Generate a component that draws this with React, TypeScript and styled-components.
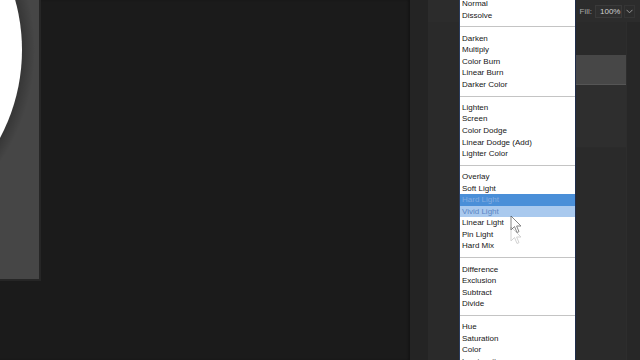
import React from 'react'
import styled, { createGlobalStyle } from 'styled-components'

const GlobalStyle = createGlobalStyle`
  html, body {
    margin: 0;
    padding: 0;
    background: #1b1b1b;
  }
  * {
    box-sizing: border-box;
  }
`

const Screen = styled.div`
  display: flex;
  width: 640px;
  height: 360px;
  overflow: hidden;
  font-family: 'Liberation Sans', Arial, sans-serif;
`

const Canvas = styled.div`
  width: 410px;
  background: #1b1b1b;
  box-shadow: inset -2px 0 2px rgba(0, 0, 0, 0.25);
`

const Document = styled.div`
  width: 41px;
  height: 281px;
  background: #464646;
  border-right: 2px solid #262626;
  border-bottom: 2px solid #262626;
  overflow: hidden;
`

const Gutter = styled.div`
  width: 18px;
  background: #242424;
`

const Panel = styled.div`
  position: relative;
  flex: 1;
  display: flex;
  flex-direction: column;
  background: #2a2a2a;
`

const Toolbar = styled.div`
  height: 22px;
  display: flex;
  align-items: center;
  justify-content: flex-end;
  padding-right: 5px;
  gap: 2px;
  background: #2c2c2c;
  font-size: 8px;
  color: #a8a8a8;
`

const FillLabel = styled.span`
  margin-right: 1px;
`

const Field = styled.div`
  width: 27px;
  height: 13px;
  display: flex;
  align-items: center;
  padding-left: 4px;
  background: #2f2f2f;
  border: 1px solid #3a3a3a;
  color: #d0d0d0;
`

const Chevron = styled.div`
  width: 11px;
  height: 13px;
  display: flex;
  align-items: center;
  justify-content: center;
  border: 1px solid #353535;
`

const Body = styled.div`
  flex: 1;
  display: flex;
`

const LeftSpace = styled.div`
  width: 31px;
`

const LayerList = styled.div`
  flex: 1;
  display: flex;
  flex-direction: column;
  padding-top: 33px;
`

const LayerRow = styled.div<{ $active?: boolean }>`
  height: ${(p) => (p.$active ? 30 : 63)}px;
  background: ${(p) => (p.$active ? '#474747' : '#2e2e2e')};
  border-bottom: 1px solid ${(p) => (p.$active ? '#555555' : '#2b2b2b')};
`

const Scrollbar = styled.div`
  width: 14px;
  background: #272727;
  border-left: 1px solid #2d2d2d;
`

const Menu = styled.div`
  position: absolute;
  left: 31px;
  top: -2px;
  width: 117px;
  background: #ffffff;
  border-left: 1px solid #2b3c5c;
  border-right: 1px solid #1e2c4a;
  display: flex;
  flex-direction: column;
`

const Item = styled.div<{ $state?: 'hover' | 'selected' }>`
  height: 11.56px;
  line-height: 11.56px;
  padding-left: 2px;
  font-size: 8px;
  white-space: nowrap;
  color: ${(p) =>
    p.$state === 'hover' ? '#86aee0' : p.$state === 'selected' ? '#5b86c4' : '#161616'};
  background: ${(p) =>
    p.$state === 'hover' ? '#4a8fd8' : p.$state === 'selected' ? '#a9c9ee' : 'transparent'};
`

const Separator = styled.div`
  height: 11.56px;
  display: flex;
  align-items: center;

  &::after {
    content: '';
    flex: 1;
    height: 1px;
    background: #c4c4c4;
  }
`

const Cursor = styled.svg<{ $y: number; $fade: number }>`
  position: absolute;
  left: 82px;
  top: ${(p) => p.$y}px;
  opacity: ${(p) => p.$fade};
`

const groups: string[][] = [
  ['Normal', 'Dissolve'],
  ['Darken', 'Multiply', 'Color Burn', 'Linear Burn', 'Darker Color'],
  ['Lighten', 'Screen', 'Color Dodge', 'Linear Dodge (Add)', 'Lighter Color'],
  ['Overlay', 'Soft Light', 'Hard Light', 'Vivid Light', 'Linear Light', 'Pin Light', 'Hard Mix'],
  ['Difference', 'Exclusion', 'Subtract', 'Divide'],
  ['Hue', 'Saturation', 'Color', 'Luminosity'],
]

function stateOf(name: string): 'hover' | 'selected' | undefined {
  if (name === 'Hard Light') return 'hover'
  if (name === 'Vivid Light') return 'selected'
  return undefined
}

function Circle() {
  return (
    <svg width="41" height="281" viewBox="0 0 41 281">
      <defs>
        <radialGradient id="halo" cx="-165" cy="50" r="200" gradientUnits="userSpaceOnUse">
          <stop offset="0.9" stopColor="#000" stopOpacity="0.35" />
          <stop offset="1" stopColor="#000" stopOpacity="0" />
        </radialGradient>
      </defs>
      <circle cx="-165" cy="50" r="200" fill="url(#halo)" />
      <circle cx="-165" cy="50" r="187" fill="#ffffff" />
    </svg>
  )
}

function Arrow({ y, fade }: { y: number; fade: number }) {
  return (
    <Cursor $y={y} $fade={fade} width="12" height="19" viewBox="0 0 12 19">
      <path
        d="M1 1 L1 15 L4.5 11.5 L7 17.5 L9 16.6 L6.6 11 L11 11 Z"
        fill="#ffffff"
        stroke="#222222"
        strokeWidth="1"
        strokeLinejoin="round"
      />
    </Cursor>
  )
}

export default function App() {
  return (
    <>
      <GlobalStyle />
      <Screen>
        <Canvas>
          <Document>
            <Circle />
          </Document>
        </Canvas>
        <Gutter />
        <Panel>
          <Toolbar>
            <FillLabel>Fill:</FillLabel>
            <Field>100%</Field>
            <Chevron>
              <svg width="7" height="5" viewBox="0 0 7 5">
                <path d="M0.5 0.8 L3.5 3.8 L6.5 0.8" fill="none" stroke="#9a9a9a" strokeWidth="1" />
              </svg>
            </Chevron>
          </Toolbar>
          <Body>
            <LeftSpace />
            <LayerList>
              <LayerRow $active />
              <LayerRow />
            </LayerList>
            <Scrollbar />
          </Body>
          <Menu>
            {groups.map((group, i) => (
              <React.Fragment key={i}>
                {i > 0 && <Separator />}
                {group.map((name) => (
                  <Item key={name} $state={stateOf(name)}>
                    {name}
                  </Item>
                ))}
              </React.Fragment>
            ))}
          </Menu>
          <Arrow y={215} fade={0.55} />
          <Arrow y={226} fade={0.2} />
        </Panel>
      </Screen>
    </>
  )
}
